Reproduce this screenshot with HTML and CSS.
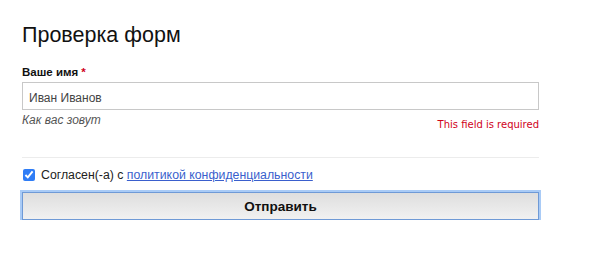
FILE: index.html
```html
<!DOCTYPE html>
<html lang="ru">
<head>
<meta charset="utf-8">
<title>Проверка форм</title>
<link rel="stylesheet" href="styles.css">
</head>
<body>
<form class="form">
  <h1 class="title">Проверка форм</h1>
  <label class="label" for="name">Ваше имя <span class="req">*</span></label>
  <input class="input" id="name" type="text" value="Иван Иванов">
  <div class="meta">
    <span class="hint">Как вас зовут</span>
    <span class="error">This field is required</span>
  </div>
  <hr class="sep">
  <label class="agree">
    <input class="check" type="checkbox" checked>
    <span>Согласен(-а) с <a class="link" href="#">политикой конфиденциальности</a></span>
  </label>
  <button class="submit" type="button">Отправить</button>
</form>
</body>
</html>
```
FILE: styles.css
```css
html, body {
  margin: 0;
  background: #fff;
}
body {
  font-family: "Liberation Sans", Arial, sans-serif;
  color: #111;
}
.form {
  width: 517px;
  padding: 23px 0 0 22px;
  display: flex;
  flex-direction: column;
}
.title {
  margin: 0;
  font-size: 21.5px;
  line-height: 24px;
  font-weight: normal;
  color: #111;
}
.label {
  margin-top: 19px;
  font-size: 11.5px;
  line-height: 13px;
  font-weight: bold;
  color: #111;
}
.req {
  color: #d0021b;
}
.input {
  margin: 3px 0 0;
  box-sizing: border-box;
  width: 517px;
  height: 28px;
  border: 1px solid #c8c8c8;
  border-radius: 0;
  padding: 7px 6px 4px;
  font-family: "Liberation Sans", Arial, sans-serif;
  font-size: 12px;
  line-height: 15px;
  color: #444;
  outline: none;
}
.meta {
  margin-top: 3px;
  display: flex;
  justify-content: space-between;
  align-items: flex-start;
}
.hint {
  font-size: 12px;
  line-height: 14px;
  font-style: italic;
  color: #555;
}
.error {
  margin-top: 5px;
  font-family: "DejaVu Sans", Verdana, sans-serif;
  font-size: 10px;
  line-height: 13px;
  color: #d0021b;
}
.sep {
  margin: 26px 0 0;
  border: 0;
  height: 1px;
  background: #ececec;
}
.agree {
  margin-top: 10px;
  display: flex;
  align-items: center;
  gap: 6px;
  font-size: 12.3px;
  line-height: 14px;
  color: #222;
}
.check {
  margin: 0 0 0 1px;
  width: 12px;
  height: 12px;
  accent-color: #2f7df6;
}
.link {
  color: #3a5fcd;
  text-decoration: underline;
}
.submit {
  margin-top: 10px;
  box-sizing: border-box;
  width: 517px;
  height: 28px;
  border: 1px solid #6f9ad6;
  border-radius: 0;
  background: linear-gradient(#dedede, #f1f1f1);
  box-shadow: 0 0 0 2px #a9cbf6;
  font-family: "Liberation Sans", Arial, sans-serif;
  font-size: 13.5px;
  font-weight: bold;
  color: #111;
  padding: 0;
}
```
